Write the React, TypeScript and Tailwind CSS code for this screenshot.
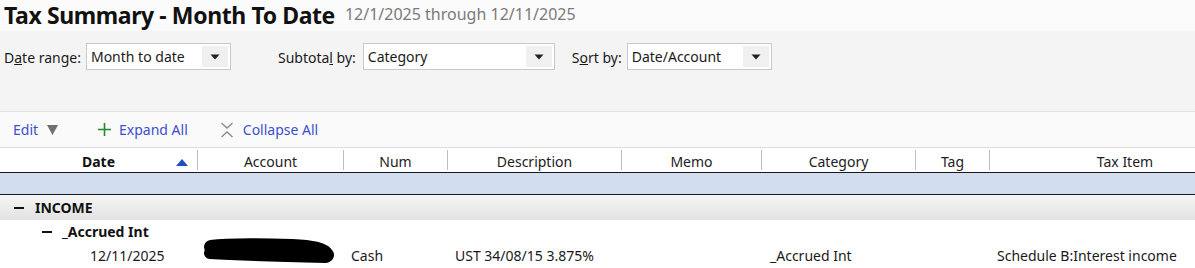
// ── Dropdown ───────────────────────────────────────────────────────────────

function Dropdown({ value, width }: { value: string; width: string }) {
  return (
    <div className={`${width} h-[27px] flex items-stretch bg-white border border-[#c9c9c9]`}>
      <div className="flex-1 pl-[4px] flex items-center text-[14px] text-[#1a1a1a]">{value}</div>
      <div className="w-[26px] mr-[2px] my-[2px] bg-[#f0f0f0] flex items-center justify-center">
        <svg width="10" height="6" viewBox="0 0 10 6"><path d="M0.5 0.5 L9.5 0.5 L5 5.5 Z" fill="#222" /></svg>
      </div>
    </div>
  )
}

// ── Column header ──────────────────────────────────────────────────────────

const COLS = [
  { label: 'Date', w: 'w-[198px]', bold: true },
  { label: 'Account', w: 'w-[146px]' },
  { label: 'Num', w: 'w-[104px]' },
  { label: 'Description', w: 'w-[174px]' },
  { label: 'Memo', w: 'w-[140px]' },
  { label: 'Category', w: 'w-[154px]' },
  { label: 'Tag', w: 'w-[74px]' },
  { label: 'Tax Item', w: 'w-[270px]' },
]

function HeaderRow() {
  return (
    <div className="h-[24px] flex bg-white overflow-hidden">
      {COLS.map((c, i) => (
        <div
          key={c.label}
          className={`${c.w} shrink-0 relative flex items-center justify-center pt-[2px] text-[14px] ${c.bold ? 'font-bold text-[#111]' : 'text-[#222]'} ${i < COLS.length - 1 ? 'border-r border-[#bdbdbd]' : ''} my-[2px]`}
        >
          {c.label}
          {c.bold && (
            <svg className="absolute right-[9px] top-[9px]" width="12" height="7" viewBox="0 0 12 7">
              <path d="M0 7 L6 0 L12 7 Z" fill="#1f4fc4" />
            </svg>
          )}
        </div>
      ))}
    </div>
  )
}

// ── Page ───────────────────────────────────────────────────────────────────

export default function App() {
  return (
    <div className="w-[1195px] h-[268px] overflow-hidden bg-white flex flex-col text-[#1a1a1a]" style={{ fontFamily: '"Noto Sans", "Open Sans", sans-serif' }}>
      {/* Title */}
      <div className="h-[31px] bg-[#fbfbfb] flex items-center pl-[4px] gap-[10px]">
        <span className="text-[23px] font-bold tracking-[-0.4px] text-[#111]">Tax Summary - Month To Date</span>
        <span className="text-[16px] text-[#7a7a7a] mt-[-4px]">12/1/2025 through 12/11/2025</span>
      </div>

      {/* Controls */}
      <div className="h-[81px] bg-[#f4f4f4] border-b border-[#e2e2e2] pt-[12px] flex items-start text-[14px]">
        <span className="pl-[4px] mt-[4px]">D<u>a</u>te range:</span>
        <div className="ml-[5px]"><Dropdown value="Month to date" width="w-[145px]" /></div>
        <span className="ml-[47px] mt-[4px]">Subtota<u>l</u> by:</span>
        <div className="ml-[7px]"><Dropdown value="Category" width="w-[192px]" /></div>
        <span className="ml-[17px] mt-[4px]">S<u>o</u>rt by:</span>
        <div className="ml-[5px]"><Dropdown value="Date/Account" width="w-[145px]" /></div>
      </div>

      {/* Toolbar */}
      <div className="h-[36px] bg-[#fafafa] border-b border-[#dcdcdc] flex items-center text-[14px] text-[#3d4fcf]">
        <span className="ml-[13px]">Edit</span>
        <svg className="ml-[9px]" width="11" height="10" viewBox="0 0 11 10"><path d="M0 0 L11 0 L5.5 10 Z" fill="#707070" /></svg>
        <svg className="ml-[40px]" width="13" height="13" viewBox="0 0 13 13" stroke="#1e8c2c" strokeWidth="1.6">
          <path d="M6.5 0 V13 M0 6.5 H13" />
        </svg>
        <span className="ml-[8px]">Expand All</span>
        <svg className="ml-[32px]" width="14" height="16" viewBox="0 0 14 16" fill="none" stroke="#8a8a8a" strokeWidth="1.3">
          <path d="M1.5 1 L7 6 L12.5 1" />
          <path d="M1.5 15 L7 10 L12.5 15" />
        </svg>
        <span className="ml-[9px]">Collapse All</span>
      </div>

      <HeaderRow />

      {/* Selected blue row */}
      <div className="h-[23px] bg-[#d2deef] border-y-[1.5px] border-[#1a1a1a]" />

      {/* INCOME group */}
      <div className="h-[25px] bg-gradient-to-b from-[#f6f6f6] to-[#e2e2e2] flex items-center text-[14px] font-bold text-[#111]">
        <span className="ml-[14px] w-[10px] h-[2px] bg-[#111]" />
        <span className="ml-[11px]">INCOME</span>
      </div>

      {/* Subgroup */}
      <div className="h-[23px] flex items-center text-[14px] font-bold text-[#111]">
        <span className="ml-[42px] w-[10px] h-[2px] bg-[#111]" />
        <span className="ml-[10px]">_Accrued Int</span>
      </div>

      {/* Transaction */}
      <div className="h-[24px] flex items-center text-[14px] text-[#1a1a1a]">
        <span className="w-[200px] pl-[90px]">12/11/2025</span>
        <span className="w-[151px] relative h-full">
          <svg className="absolute left-[2px] top-[-6px]" width="135" height="30" viewBox="0 0 135 30">
            <path d="M9 10 C30 7, 60 8, 90 9 C110 10, 122 12, 125 18" stroke="#000" strokeWidth="14" strokeLinecap="round" fill="none" />
            <path d="M8 16 C40 18, 80 19, 124 20" stroke="#000" strokeWidth="12" strokeLinecap="round" fill="none" />
          </svg>
        </span>
        <span className="w-[104px]">Cash</span>
        <span className="w-[315px]">UST 34/08/15 3.875%</span>
        <span className="w-[227px]">_Accrued Int</span>
        <span>Schedule B:Interest income</span>
      </div>
    </div>
  )
}
